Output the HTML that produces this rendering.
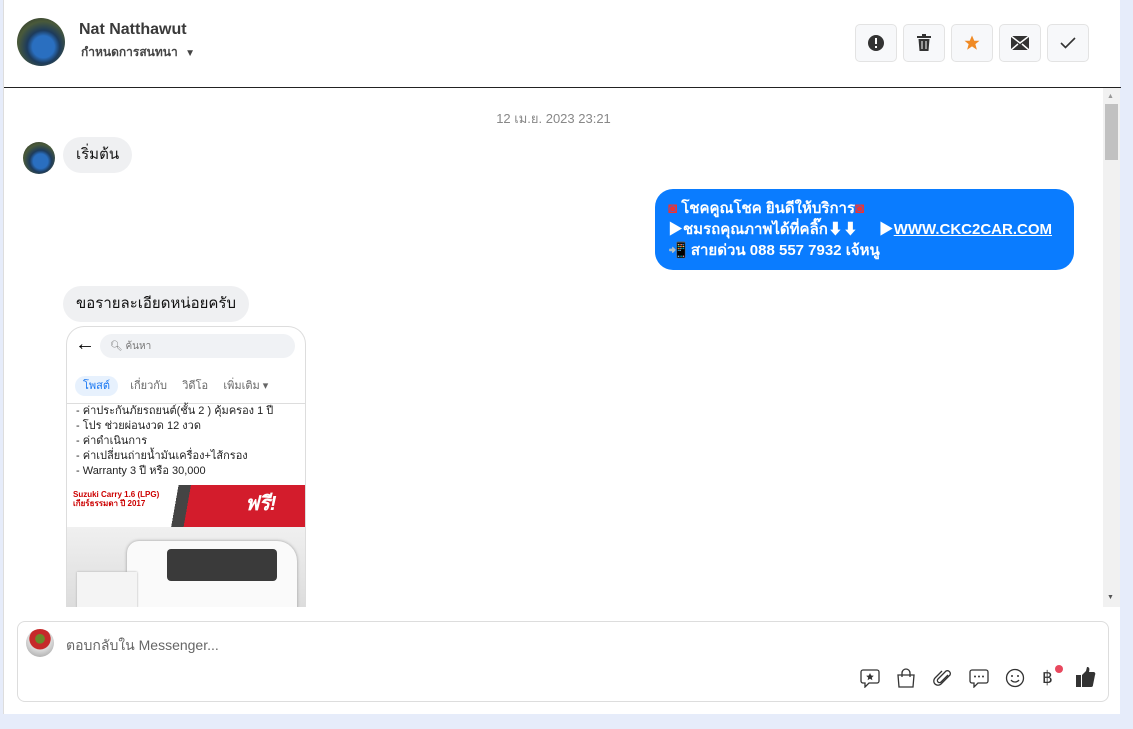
<!DOCTYPE html>
<html><head><meta charset="utf-8"><style>
*{box-sizing:border-box;margin:0;padding:0}
body{width:1133px;height:729px;background:#e6ecfa;font-family:"Liberation Sans","Noto Sans CJK SC",sans-serif;position:relative;overflow:hidden}
.panel{position:absolute;left:3px;top:0;width:1117px;height:714px;background:#fff;border-left:1px solid #ddd}
.hdr{position:absolute;left:0;top:0;width:1117px;height:88px;border-bottom:1.5px solid #222}
.av{position:absolute;border-radius:50%;background:radial-gradient(circle at 55% 60%,#2a6fc0 0 28%,#1d3b5c 42%,#4a5a3a 65%,#222 100%)}
.btn{position:absolute;top:24px;width:42px;height:38px;border:1px solid #e3e3e3;border-radius:5px;background:#f7f8fa;display:flex;align-items:center;justify-content:center}
.bub{position:absolute;background:#eff0f2;border-radius:18px;font-size:15px;color:#111;padding:0 13px;line-height:36px}
.scroll{position:absolute;left:1099px;top:88px;width:17px;height:519px;background:#f1f1f1}
.icons svg{position:absolute;top:668px}
</style></head><body>
<div class="panel">
 <div class="hdr">
  <div class="av" style="left:13px;top:18px;width:48px;height:48px"></div>
  <div style="position:absolute;left:75px;top:21px;font-size:16px;font-weight:bold;color:#3a3a3a">Nat Natthawut</div>
  <div style="position:absolute;left:77px;top:43px;font-size:12px;color:#444;font-weight:bold">กำหนดการสนทนา <span style="font-size:10px;margin-left:4px">▼</span></div>
  <div class="btn" style="left:851px"><svg width="18" height="18" viewBox="0 0 18 18"><circle cx="9" cy="9" r="8" fill="#333"/><rect x="8" y="4" width="2" height="6" fill="#fff"/><rect x="8" y="12" width="2" height="2" fill="#fff"/></svg></div>
  <div class="btn" style="left:899px"><svg width="16" height="18" viewBox="0 0 16 18"><rect x="1" y="2" width="14" height="2" fill="#333"/><rect x="6" y="0" width="4" height="2" fill="#333"/><path d="M2.5 5h11l-1 12h-9z" fill="#333"/><rect x="5.5" y="7" width="1" height="8" fill="#fff"/><rect x="9.5" y="7" width="1" height="8" fill="#fff"/></svg></div>
  <div class="btn" style="left:947px"><svg width="18" height="18" viewBox="0 0 24 24"><path d="M12 2l3 7h7l-5.5 4.5 2 7.5-6.5-4.5-6.5 4.5 2-7.5L2 9h7z" fill="#f08a24"/></svg></div>
  <div class="btn" style="left:995px"><svg width="18" height="14" viewBox="0 0 18 14"><rect width="18" height="14" fill="#333"/><path d="M0 0l9 7 9-7M0 14l7-6M18 14l-7-6" stroke="#fff" stroke-width="1.5" fill="none"/></svg></div>
  <div class="btn" style="left:1043px"><svg width="16" height="12" viewBox="0 0 16 12"><path d="M1 6l4.5 4.5L15 1" stroke="#333" stroke-width="1.6" fill="none"/></svg></div>
 </div>
 <div style="position:absolute;left:0;width:1099px;top:108px;text-align:center;font-size:13px;color:#888">12 เม.ย. 2023 23:21</div>
 <div class="av" style="left:19px;top:142px;width:32px;height:32px"></div>
 <div class="bub" style="left:59px;top:137px">เริ่มต้น</div>
 <div style="position:absolute;left:651px;top:189px;width:419px;height:81px;background:#0a7cff;border-radius:18px;color:#fff;font-size:15px;line-height:21px;padding:9px 13px;font-weight:bold">
  <div><span style="color:#e33">◙</span> โชคคูณโชค ยินดีให้บริการ<span style="color:#e33">◙</span></div>
  <div>▶ชมรถคุณภาพได้ที่คลิ๊ก⬇⬇ &nbsp;&nbsp;&nbsp; ▶<u>WWW.CKC2CAR.COM</u></div>
  <div>📲 สายด่วน 088 557 7932 เจ้หนู</div>
 </div>
 <div class="bub" style="left:59px;top:286px">ขอรายละเอียดหน่อยครับ</div>
 <div style="position:absolute;left:62px;top:326px;width:240px;height:281px;border:1px solid #ddd;border-bottom:none;border-radius:18px 18px 0 0;overflow:hidden;background:#fff">
  <div style="position:absolute;left:8px;top:6px;font-size:20px;font-weight:bold">←</div>
  <div style="position:absolute;left:33px;top:7px;width:195px;height:24px;background:#f0f2f5;border-radius:12px;font-size:10px;color:#777;padding:5px 10px">🔍︎ ค้นหา</div>
  <div style="position:absolute;left:8px;top:49px;font-size:11px;color:#666">
   <span style="background:#e7f1fd;color:#1877f2;padding:4px 8px;border-radius:10px">โพสต์</span> &nbsp;&nbsp; เกี่ยวกับ &nbsp;&nbsp;&nbsp; วิดีโอ &nbsp;&nbsp;&nbsp; เพิ่มเติม ▾</div>
  <div style="position:absolute;left:0;top:76px;width:240px;border-top:1px solid #ddd"></div>
  <div style="position:absolute;left:9px;top:77px;font-size:11px;line-height:15px;color:#222">- ค่าประกันภัยรถยนต์(ชั้น 2 ) คุ้มครอง 1 ปี<br>- โปร ช่วยผ่อนงวด 12 งวด<br>- ค่าดำเนินการ<br>- ค่าเปลี่ยนถ่ายน้ำมันเครื่อง+ไส้กรอง<br>- Warranty 3 ปี หรือ 30,000</div>
  <div style="position:absolute;left:0;top:158px;width:240px;height:45px;background:linear-gradient(100deg,#fff 0 45%,#444 45% 50%,#d31c2c 50%)"></div>
  <div style="position:absolute;left:6px;top:163px;font-size:8px;color:#c00;font-weight:bold;line-height:9px">Suzuki Carry 1.6 (LPG)<br>เกียร์ธรรมดา ปี 2017</div>
  <div style="position:absolute;left:178px;top:160px;font-size:20px;color:#fff;font-weight:bold;font-style:italic">ฟรี!</div>
  <div style="position:absolute;left:0;top:200px;width:240px;height:81px;background:linear-gradient(#f0f0f0,#dcdcdc)"></div>
  <div style="position:absolute;left:60px;top:214px;width:170px;height:70px;background:#fafafa;border-radius:12px 20px 0 0;box-shadow:0 0 3px #999"></div>
  <div style="position:absolute;left:100px;top:222px;width:110px;height:32px;background:#3a3a3a;border-radius:4px"></div>
  <div style="position:absolute;left:10px;top:245px;width:60px;height:36px;background:#f4f4f4;box-shadow:0 0 2px #aaa"></div>
 </div>
 <div class="scroll"><div style="position:absolute;left:4px;top:5px;font-size:7px;color:#999">▲</div><div style="position:absolute;left:2px;top:16px;width:13px;height:56px;background:#c1c1c1"></div><div style="position:absolute;left:4px;top:506px;font-size:7px;color:#555">▼</div></div>
 <div style="position:absolute;left:13px;top:621px;width:1092px;height:81px;border:1px solid #ddd;border-radius:8px"></div>
 <div style="position:absolute;left:22px;top:629px;width:28px;height:28px;border-radius:50%;background:radial-gradient(circle at 50% 35%,#6a8a2a 0 20%,#c62a2a 22% 45%,#ddd 48%,#999 100%)"></div>
 <div style="position:absolute;left:62px;top:635px;font-size:14px;color:#666">ตอบกลับใน Messenger...</div>
 <div class="icons">
  <svg style="left:856px" width="20" height="20" viewBox="0 0 20 20"><path d="M3 2h14a2 2 0 0 1 2 2v9a2 2 0 0 1-2 2H9l-4 4v-4H3a2 2 0 0 1-2-2V4a2 2 0 0 1 2-2z" fill="none" stroke="#333" stroke-width="1.3"/><path d="M10 5l1.2 2.5 2.6.3-2 1.8.6 2.6-2.4-1.4-2.4 1.4.6-2.6-2-1.8 2.6-.3z" fill="#333"/></svg>
  <svg style="left:892px" width="20" height="20" viewBox="0 0 20 20"><path d="M2 7h16l-1 12H3z" fill="none" stroke="#333" stroke-width="1.3"/><path d="M6 9V5a4 4 0 0 1 8 0v4" fill="none" stroke="#333" stroke-width="1.3"/></svg>
  <svg style="left:929px" width="20" height="20" viewBox="0 0 20 20"><path d="M15 7l-7 7a2 2 0 0 1-3-3l8-8a3 3 0 0 1 4 4l-9 9a4 4 0 0 1-6-6l7-7" fill="none" stroke="#333" stroke-width="1.3"/></svg>
  <svg style="left:965px" width="20" height="20" viewBox="0 0 20 20"><path d="M3 2h14a2 2 0 0 1 2 2v9a2 2 0 0 1-2 2H9l-4 4v-4H3a2 2 0 0 1-2-2V4a2 2 0 0 1 2-2z" fill="none" stroke="#333" stroke-width="1.3"/><circle cx="6" cy="8.5" r="1" fill="#333"/><circle cx="10" cy="8.5" r="1" fill="#333"/><circle cx="14" cy="8.5" r="1" fill="#333"/></svg>
  <svg style="left:1001px" width="20" height="20" viewBox="0 0 20 20"><circle cx="10" cy="10" r="8.5" fill="none" stroke="#333" stroke-width="1.3"/><circle cx="7" cy="8" r="1" fill="#333"/><circle cx="13" cy="8" r="1" fill="#333"/><path d="M6 12a5 5 0 0 0 8 0" fill="none" stroke="#333" stroke-width="1.3"/></svg>
  <div style="position:absolute;left:1038px;top:668px;font-size:17px;color:#333">฿</div>
  <div style="position:absolute;left:1051px;top:665px;width:8px;height:8px;border-radius:50%;background:#e8485e"></div>
  <svg style="left:1071px;top:666px" width="22" height="22" viewBox="0 0 22 22"><rect x="1" y="9" width="5" height="12" fill="#333"/><path d="M7 9l4-4 1-4c2 0 3 1 2 5h5a2 2 0 0 1 1 3l-2 10a2 2 0 0 1-2 2H7z" fill="#333"/></svg>
 </div>
</div>
</body></html>
